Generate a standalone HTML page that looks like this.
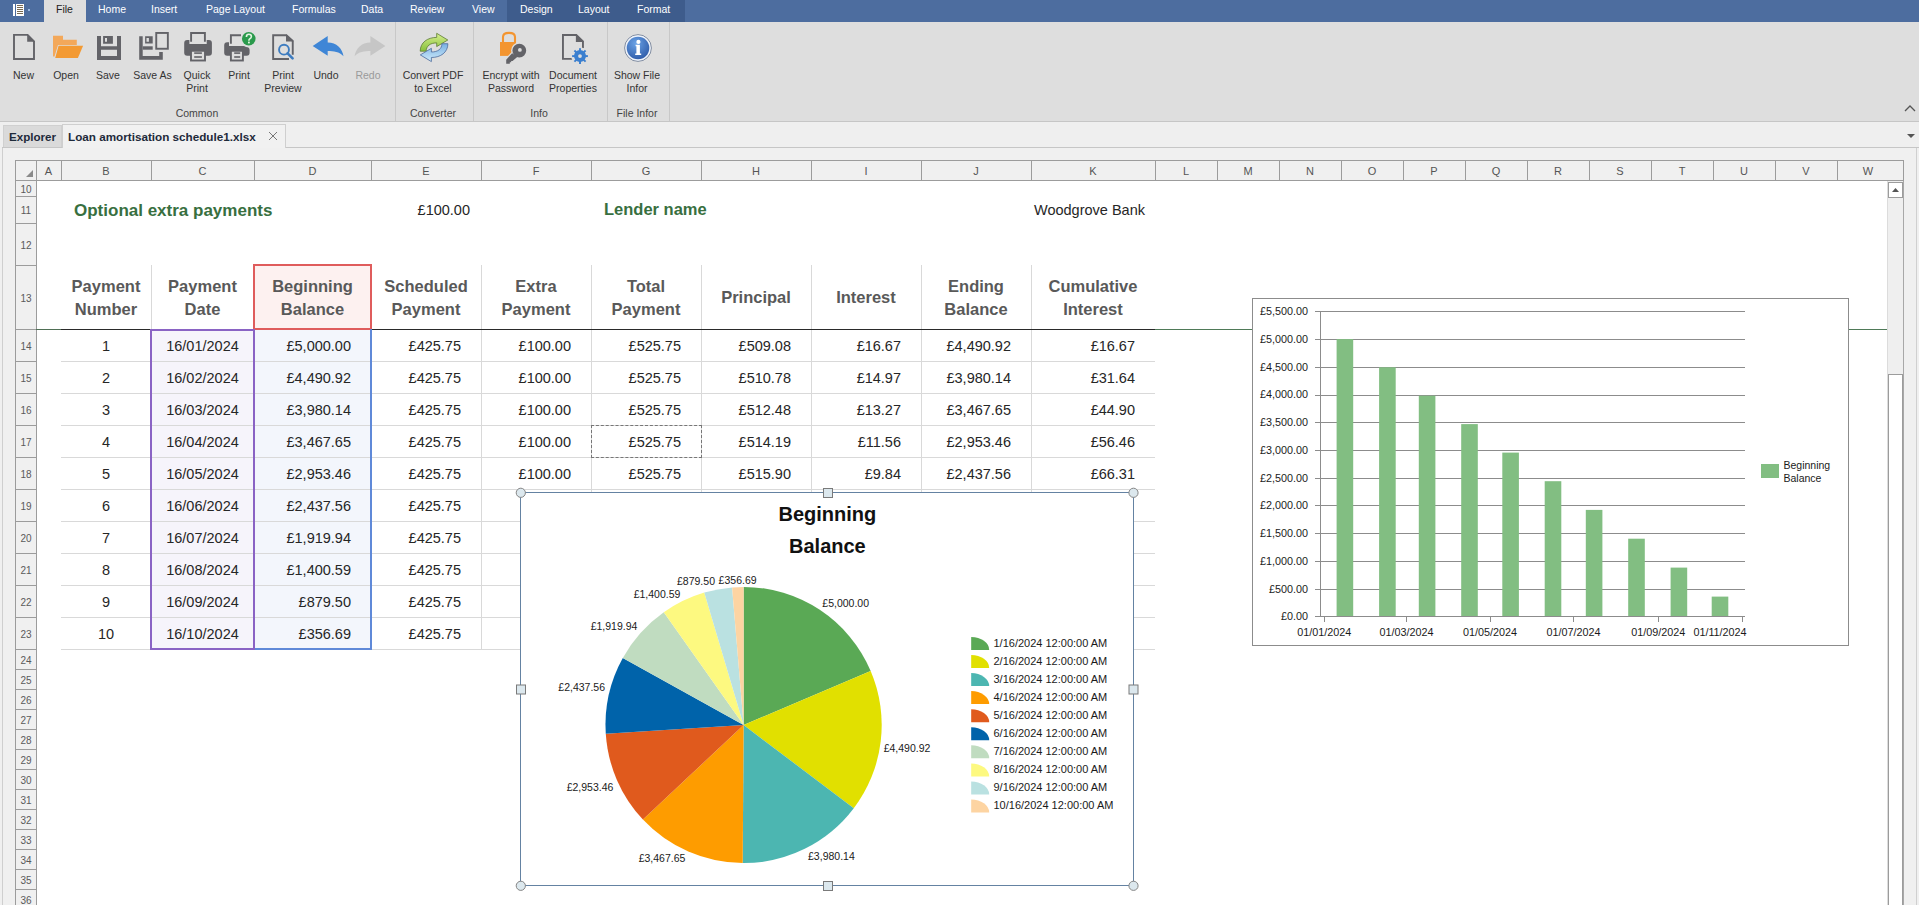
<!DOCTYPE html><html><head><meta charset="utf-8"><style>

*{box-sizing:border-box;margin:0;padding:0}
html,body{width:1919px;height:905px;overflow:hidden;background:#f0f0f0;font-family:"Liberation Sans", sans-serif;position:relative}
.ab{position:absolute}
.t{position:absolute;white-space:nowrap;line-height:1}

</style></head><body>
<div class="ab" style="left:0;top:0;width:1919px;height:22px;background:#4d6d9f"></div>
<div class="ab" style="left:507px;top:0;width:178px;height:22px;background:#3e5c8c"></div>
<div class="ab" style="left:44px;top:0;width:42px;height:22px;background:#dedede"></div>
<div class="ab" style="left:13px;top:4px;width:2px;height:12px;background:#fff"></div>
<div class="ab" style="left:16px;top:4px;width:8px;height:12px;background:#fff"></div>
<div class="ab" style="left:17px;top:5px;width:6px;height:1px;background:#7a6a50"></div>
<div class="ab" style="left:17px;top:7px;width:6px;height:1px;background:#7a6a50"></div>
<div class="ab" style="left:17px;top:9px;width:6px;height:1px;background:#7a6a50"></div>
<div class="ab" style="left:17px;top:11px;width:6px;height:1px;background:#7a6a50"></div>
<div class="ab" style="left:17px;top:13px;width:6px;height:1px;background:#7a6a50"></div>
<div class="ab" style="left:28px;top:9px;width:2px;height:2px;background:#9ab8e0"></div>
<div class="t" style="left:56px;top:4px;font-size:10.5px;color:#222">File</div>
<div class="t" style="left:98px;top:4px;font-size:10.5px;color:#fff">Home</div>
<div class="t" style="left:151px;top:4px;font-size:10.5px;color:#fff">Insert</div>
<div class="t" style="left:206px;top:4px;font-size:10.5px;color:#fff">Page Layout</div>
<div class="t" style="left:292px;top:4px;font-size:10.5px;color:#fff">Formulas</div>
<div class="t" style="left:361px;top:4px;font-size:10.5px;color:#fff">Data</div>
<div class="t" style="left:410px;top:4px;font-size:10.5px;color:#fff">Review</div>
<div class="t" style="left:472px;top:4px;font-size:10.5px;color:#fff">View</div>
<div class="t" style="left:520px;top:4px;font-size:10.5px;color:#fff">Design</div>
<div class="t" style="left:578px;top:4px;font-size:10.5px;color:#fff">Layout</div>
<div class="t" style="left:637px;top:4px;font-size:10.5px;color:#fff">Format</div>
<div class="ab" style="left:0;top:22px;width:1919px;height:100px;background:#dedede;border-bottom:1px solid #c6c6c6"></div>
<div class="ab" style="left:395px;top:22px;width:1px;height:99px;background:#c8c8c8"></div>
<div class="ab" style="left:473px;top:22px;width:1px;height:99px;background:#c8c8c8"></div>
<div class="ab" style="left:607px;top:22px;width:1px;height:99px;background:#c8c8c8"></div>
<div class="ab" style="left:669px;top:22px;width:1px;height:99px;background:#c8c8c8"></div>
<div class="t" style="left:-76.5px;width:200px;text-align:center;top:69.5px;font-size:10.5px;color:#333">New</div>
<div class="t" style="left:-34px;width:200px;text-align:center;top:69.5px;font-size:10.5px;color:#333">Open</div>
<div class="t" style="left:8px;width:200px;text-align:center;top:69.5px;font-size:10.5px;color:#333">Save</div>
<div class="t" style="left:52.5px;width:200px;text-align:center;top:69.5px;font-size:10.5px;color:#333">Save As</div>
<div class="t" style="left:97px;width:200px;text-align:center;top:69.5px;font-size:10.5px;color:#333">Quick</div>
<div class="t" style="left:97px;width:200px;text-align:center;top:82.5px;font-size:10.5px;color:#333">Print</div>
<div class="t" style="left:139px;width:200px;text-align:center;top:69.5px;font-size:10.5px;color:#333">Print</div>
<div class="t" style="left:183px;width:200px;text-align:center;top:69.5px;font-size:10.5px;color:#333">Print</div>
<div class="t" style="left:183px;width:200px;text-align:center;top:82.5px;font-size:10.5px;color:#333">Preview</div>
<div class="t" style="left:226px;width:200px;text-align:center;top:69.5px;font-size:10.5px;color:#333">Undo</div>
<div class="t" style="left:268px;width:200px;text-align:center;top:69.5px;font-size:10.5px;color:#9a9a9a">Redo</div>
<div class="t" style="left:333px;width:200px;text-align:center;top:69.5px;font-size:10.5px;color:#333">Convert PDF</div>
<div class="t" style="left:333px;width:200px;text-align:center;top:82.5px;font-size:10.5px;color:#333">to Excel</div>
<div class="t" style="left:411px;width:200px;text-align:center;top:69.5px;font-size:10.5px;color:#333">Encrypt with</div>
<div class="t" style="left:411px;width:200px;text-align:center;top:82.5px;font-size:10.5px;color:#333">Password</div>
<div class="t" style="left:473px;width:200px;text-align:center;top:69.5px;font-size:10.5px;color:#333">Document</div>
<div class="t" style="left:473px;width:200px;text-align:center;top:82.5px;font-size:10.5px;color:#333">Properties</div>
<div class="t" style="left:537px;width:200px;text-align:center;top:69.5px;font-size:10.5px;color:#333">Show File</div>
<div class="t" style="left:537px;width:200px;text-align:center;top:82.5px;font-size:10.5px;color:#333">Infor</div>
<div class="t" style="left:97px;width:200px;text-align:center;top:107.5px;font-size:10.5px;color:#444">Common</div>
<div class="t" style="left:333px;width:200px;text-align:center;top:107.5px;font-size:10.5px;color:#444">Converter</div>
<div class="t" style="left:439px;width:200px;text-align:center;top:107.5px;font-size:10.5px;color:#444">Info</div>
<div class="t" style="left:537px;width:200px;text-align:center;top:107.5px;font-size:10.5px;color:#444">File Infor</div>
<svg class="ab" style="left:0;top:22px" width="700" height="50" viewBox="0 22 700 50">
<defs>
<linearGradient id="ggr" x1="0" y1="0" x2="0" y2="1"><stop offset="0" stop-color="#d8f090"/><stop offset="1" stop-color="#86c03a"/></linearGradient>
<linearGradient id="bgr" x1="0" y1="0" x2="0" y2="1"><stop offset="0" stop-color="#d0ecfc"/><stop offset="1" stop-color="#78b0e2"/></linearGradient>
<radialGradient id="igr" cx="0.4" cy="0.3" r="0.8"><stop offset="0" stop-color="#6aa2e6"/><stop offset="1" stop-color="#2a56a4"/></radialGradient>
</defs>
<path d="M14,34.9 H27.6 L34,41.3 V59 H14 Z" fill="none" stroke="#636368" stroke-width="1.9"/>
<path d="M27.2,34 L35,41.8 H27.2 Z" fill="#636368"/>
<path d="M53,35.8 H63 V39.7 H76.8 V45 H58 L54.5,56.5 H53 Z" fill="#f3a85a"/>
<path d="M58.6,45.8 H83.1 L77.9,57.9 H55.2 Z" fill="#f39a33"/>
<path fill-rule="evenodd" d="M97,36 H121 V60 H97 Z M101,36 H117 V46.2 H101 Z M101,49.7 H117 V55.9 H101 Z" fill="#636368"/>
<path fill-rule="evenodd" d="M103.1,36 H112.9 V43.7 H103.1 Z M105,38.1 H107 V41.8 H105 Z" fill="#636368"/>
<path d="M139.2,36.2 H142.7 V56 H159.2 V52 H162.8 V59.8 H139.2 Z" fill="#636368"/>
<rect x="142.7" y="46.3" width="10" height="3.4" fill="#636368"/>
<path fill-rule="evenodd" d="M145.1,36.2 H152.7 V43.5 H145.1 Z M146.5,37.9 H148.9 V41.7 H146.5 Z" fill="#636368"/>
<rect x="156.25" y="32.95" width="11.6" height="15.8" fill="none" stroke="#636368" stroke-width="1.9"/>
<path d="M191.1,41.8 V33 H204.89999999999998 V41.8" fill="none" stroke="#636368" stroke-width="1.9"/><path d="M187.2,40.1 H189.39999999999998 V44 H206.7 V40.1 H208.89999999999998 Q211.89999999999998,40.1 211.89999999999998,43.1 V52.7 Q211.89999999999998,55.7 208.89999999999998,55.7 H187.2 Q184.2,55.7 184.2,52.7 V43.1 Q184.2,40.1 187.2,40.1 Z" fill="#636368"/><rect x="191.0" y="50.8" width="14" height="9.7" fill="#dedede" stroke="#636368" stroke-width="1.9"/><rect x="194.2" y="52.3" width="7.7" height="1.6" fill="#636368"/><rect x="194.2" y="56.2" width="7.7" height="1.6" fill="#636368"/>
<path d="M230.9,43.8 V35.2 H241" fill="none" stroke="#636368" stroke-width="1.9"/>
<path d="M227.2,42.2 H229 V46 H244 L246,47 Q249.6,47 249.6,50 V52.7 Q249.6,55.7 246.6,55.7 H227.2 Q224.2,55.7 224.2,52.7 V45.2 Q224.2,42.2 227.2,42.2 Z" fill="#636368"/>
<rect x="230.9" y="50.8" width="12" height="9.7" fill="#dedede" stroke="#636368" stroke-width="1.9"/>
<rect x="234.2" y="52.3" width="6" height="1.6" fill="#636368"/>
<rect x="234.2" y="56.2" width="6" height="1.6" fill="#636368"/>
<circle cx="248.75" cy="38.8" r="7.6" fill="#dedede"/>
<circle cx="248.75" cy="38.8" r="6.8" fill="#2a9a4c"/>
<path d="M246.4,36.9 Q246.4,34.3 248.9,34.3 Q251.4,34.3 251.4,36.6 Q251.4,38.2 249.6,39 Q248.9,39.4 248.9,40.7" fill="none" stroke="#e0f4e0" stroke-width="1.6"/>
<rect x="248" y="41.6" width="1.8" height="1.8" fill="#e0f4e0"/>
<path d="M289,59 H273.15 V35.2 H286.4 L292.75,41 V54.7" fill="none" stroke="#636368" stroke-width="1.9"/>
<path d="M286,34.25 L293.7,41.5 H286 Z" fill="#636368"/>
<circle cx="284" cy="49.7" r="4.95" fill="none" stroke="#3d7cc0" stroke-width="1.9"/>
<path d="M287.6,53.3 L292.6,58.4" stroke="#3d7cc0" stroke-width="2.6" stroke-linecap="round"/>
<path d="M312.7,45.9 L327.7,36.1 V42.4 C336.5,42.4 342.5,48.5 343.5,56.3 C339.5,51.8 333.5,51.1 327.7,51.1 V55.7 Z" fill="#3f86d6"/>
<g transform="translate(698.1,0) scale(-1,1)"><path d="M312.7,45.9 L327.7,36.1 V42.4 C336.5,42.4 342.5,48.5 343.5,56.3 C339.5,51.8 333.5,51.1 327.7,51.1 V55.7 Z" fill="#c6c6c6"/></g>
<path d="M420.2,51.2 C420.2,42.5 427.5,37.4 436.7,37.4 V33.3 L447.8,40 L436.7,46.6 V42.9 C430.2,42.9 426.2,46 426.2,51.2 Z" fill="url(#ggr)" stroke="#5c7a34" stroke-width="0.8"/>
<g transform="rotate(180 434.05 47.45)"><path d="M420.2,51.2 C420.2,42.5 427.5,37.4 436.7,37.4 V33.3 L447.8,40 L436.7,46.6 V42.9 C430.2,42.9 426.2,46 426.2,51.2 Z" fill="url(#bgr)" stroke="#4a6a9c" stroke-width="0.8"/></g>
<path d="M503,42.5 V37 Q503,32.9 509,32.9 Q515,32.9 515,37 V42.5" fill="none" stroke="#f39530" stroke-width="2.1"/>
<rect x="500" y="42" width="16" height="13.9" fill="#f39530"/>
<circle cx="519.3" cy="50.6" r="8.2" fill="#dedede"/>
<path d="M512.1,53.3 L506.2,59.8 L506.2,63.8 L509.8,63.8 L509.8,62.3 L511.2,62.3 L511.2,61.0 L512.6,61.0 L517.5,56.8 Z" fill="#dedede" stroke="#dedede" stroke-width="2.4" stroke-linejoin="round"/>
<path d="M512.1,53.3 L506.2,59.8 L506.2,63.8 L509.8,63.8 L509.8,62.3 L511.2,62.3 L511.2,61.0 L512.6,61.0 L517.5,56.8 Z" fill="#636368"/>
<path fill-rule="evenodd" d="M512.4,50.6 A6.9,6.9 0 1 0 526.2,50.6 A6.9,6.9 0 1 0 512.4,50.6 Z M518,49.9 A1.9,1.9 0 1 0 521.8,49.9 A1.9,1.9 0 1 0 518,49.9 Z" fill="#636368"/>
<path d="M572.7,58.85 H562.95 V35.05 H576.3 L582.95,41.5 V48.3" fill="none" stroke="#636368" stroke-width="1.9"/>
<path d="M575.9,34.1 L583.9,41.9 H575.9 Z" fill="#636368"/>
<circle cx="580" cy="56.1" r="8.8" fill="#dedede"/>
<rect x="579.05" y="48.2" width="1.9" height="3" fill="#3b7fcf" transform="rotate(0 580 56.1)"/><rect x="579.05" y="48.2" width="1.9" height="3" fill="#3b7fcf" transform="rotate(45 580 56.1)"/><rect x="579.05" y="48.2" width="1.9" height="3" fill="#3b7fcf" transform="rotate(90 580 56.1)"/><rect x="579.05" y="48.2" width="1.9" height="3" fill="#3b7fcf" transform="rotate(135 580 56.1)"/><rect x="579.05" y="48.2" width="1.9" height="3" fill="#3b7fcf" transform="rotate(180 580 56.1)"/><rect x="579.05" y="48.2" width="1.9" height="3" fill="#3b7fcf" transform="rotate(225 580 56.1)"/><rect x="579.05" y="48.2" width="1.9" height="3" fill="#3b7fcf" transform="rotate(270 580 56.1)"/><rect x="579.05" y="48.2" width="1.9" height="3" fill="#3b7fcf" transform="rotate(315 580 56.1)"/>
<path fill-rule="evenodd" d="M574,56.1 A6,6 0 1 0 586,56.1 A6,6 0 1 0 574,56.1 Z M578.1,56.1 A1.9,1.9 0 1 0 581.9,56.1 A1.9,1.9 0 1 0 578.1,56.1 Z" fill="#3b7fcf"/>
<circle cx="638" cy="48" r="13.4" fill="#eef3fb" stroke="#56647e" stroke-width="0.7"/>
<circle cx="638" cy="48" r="11.3" fill="url(#igr)"/>
<circle cx="638.4" cy="41.9" r="2.1" fill="#fff"/>
<path d="M635.6,44.8 H639.9 V53.6 H641.2 V55 H635.2 V53.6 H636.4 V46.2 H635.6 Z" fill="#fff"/>
</svg>
<svg class="ab" style="left:1904px;top:105px" width="12" height="8"><path d="M1 6 L6 1 L11 6" fill="none" stroke="#555" stroke-width="1.3"/></svg>
<div class="ab" style="left:0;top:122px;width:1919px;height:26px;background:#efefef"></div>
<div class="ab" style="left:2px;top:147px;width:1917px;height:1px;background:#c6c6c6"></div>
<div class="ab" style="left:3px;top:125px;width:59px;height:22px;background:#dadada;border:1px solid #d0d0d0;border-bottom:none"></div>
<div class="ab" style="left:62px;top:124px;width:224px;height:24px;background:#f1f1f1;border:1px solid #cfcfcf;border-bottom:none"></div>
<div class="t" style="left:9px;top:130.5px;font-size:11.6px;font-weight:bold;color:#1e2a3a">Explorer</div>
<div class="t" style="left:68px;top:130.5px;font-size:11.7px;font-weight:bold;color:#1e2a3a">Loan amortisation schedule1.xlsx</div>
<svg class="ab" style="left:268px;top:131px" width="10" height="10"><path d="M1 1 L9 9 M9 1 L1 9" stroke="#777" stroke-width="1"/></svg>
<svg class="ab" style="left:1906px;top:133px" width="10" height="6"><path d="M1 1 L9 1 L5 5 Z" fill="#555"/></svg>
<div class="ab" style="left:2px;top:148px;width:1px;height:757px;background:#cfcfcf"></div>
<div class="ab" style="left:15px;top:160px;width:1px;height:745px;background:#9c9c9c;"></div>
<div class="ab" style="left:36px;top:181px;width:1851px;height:724px;background:#ffffff;"></div>
<div class="ab" style="left:15px;top:160px;width:1889px;height:21px;background:#f0f0f0;border-top:1px solid #9c9c9c;border-bottom:1px solid #9c9c9c;border-left:1px solid #9c9c9c"></div>
<div class="ab" style="left:36px;top:160px;width:1px;height:21px;background:#9c9c9c;"></div>
<div class="t" style="left:-101.5px;width:300px;text-align:center;top:166.2px;font-size:11px;font-weight:normal;color:#555;">A</div>
<div class="ab" style="left:61px;top:160px;width:1px;height:21px;background:#9c9c9c;"></div>
<div class="t" style="left:-44.0px;width:300px;text-align:center;top:166.2px;font-size:11px;font-weight:normal;color:#555;">B</div>
<div class="ab" style="left:151px;top:160px;width:1px;height:21px;background:#9c9c9c;"></div>
<div class="t" style="left:52.5px;width:300px;text-align:center;top:166.2px;font-size:11px;font-weight:normal;color:#555;">C</div>
<div class="ab" style="left:254px;top:160px;width:1px;height:21px;background:#9c9c9c;"></div>
<div class="t" style="left:162.5px;width:300px;text-align:center;top:166.2px;font-size:11px;font-weight:normal;color:#555;">D</div>
<div class="ab" style="left:371px;top:160px;width:1px;height:21px;background:#9c9c9c;"></div>
<div class="t" style="left:276.0px;width:300px;text-align:center;top:166.2px;font-size:11px;font-weight:normal;color:#555;">E</div>
<div class="ab" style="left:481px;top:160px;width:1px;height:21px;background:#9c9c9c;"></div>
<div class="t" style="left:386.0px;width:300px;text-align:center;top:166.2px;font-size:11px;font-weight:normal;color:#555;">F</div>
<div class="ab" style="left:591px;top:160px;width:1px;height:21px;background:#9c9c9c;"></div>
<div class="t" style="left:496.0px;width:300px;text-align:center;top:166.2px;font-size:11px;font-weight:normal;color:#555;">G</div>
<div class="ab" style="left:701px;top:160px;width:1px;height:21px;background:#9c9c9c;"></div>
<div class="t" style="left:606.0px;width:300px;text-align:center;top:166.2px;font-size:11px;font-weight:normal;color:#555;">H</div>
<div class="ab" style="left:811px;top:160px;width:1px;height:21px;background:#9c9c9c;"></div>
<div class="t" style="left:716.0px;width:300px;text-align:center;top:166.2px;font-size:11px;font-weight:normal;color:#555;">I</div>
<div class="ab" style="left:921px;top:160px;width:1px;height:21px;background:#9c9c9c;"></div>
<div class="t" style="left:826.0px;width:300px;text-align:center;top:166.2px;font-size:11px;font-weight:normal;color:#555;">J</div>
<div class="ab" style="left:1031px;top:160px;width:1px;height:21px;background:#9c9c9c;"></div>
<div class="t" style="left:943.0px;width:300px;text-align:center;top:166.2px;font-size:11px;font-weight:normal;color:#555;">K</div>
<div class="ab" style="left:1155px;top:160px;width:1px;height:21px;background:#9c9c9c;"></div>
<div class="t" style="left:1036.0px;width:300px;text-align:center;top:166.2px;font-size:11px;font-weight:normal;color:#555;">L</div>
<div class="ab" style="left:1217px;top:160px;width:1px;height:21px;background:#9c9c9c;"></div>
<div class="t" style="left:1098.0px;width:300px;text-align:center;top:166.2px;font-size:11px;font-weight:normal;color:#555;">M</div>
<div class="ab" style="left:1279px;top:160px;width:1px;height:21px;background:#9c9c9c;"></div>
<div class="t" style="left:1160.0px;width:300px;text-align:center;top:166.2px;font-size:11px;font-weight:normal;color:#555;">N</div>
<div class="ab" style="left:1341px;top:160px;width:1px;height:21px;background:#9c9c9c;"></div>
<div class="t" style="left:1222.0px;width:300px;text-align:center;top:166.2px;font-size:11px;font-weight:normal;color:#555;">O</div>
<div class="ab" style="left:1403px;top:160px;width:1px;height:21px;background:#9c9c9c;"></div>
<div class="t" style="left:1284.0px;width:300px;text-align:center;top:166.2px;font-size:11px;font-weight:normal;color:#555;">P</div>
<div class="ab" style="left:1465px;top:160px;width:1px;height:21px;background:#9c9c9c;"></div>
<div class="t" style="left:1346.0px;width:300px;text-align:center;top:166.2px;font-size:11px;font-weight:normal;color:#555;">Q</div>
<div class="ab" style="left:1527px;top:160px;width:1px;height:21px;background:#9c9c9c;"></div>
<div class="t" style="left:1408.0px;width:300px;text-align:center;top:166.2px;font-size:11px;font-weight:normal;color:#555;">R</div>
<div class="ab" style="left:1589px;top:160px;width:1px;height:21px;background:#9c9c9c;"></div>
<div class="t" style="left:1470.0px;width:300px;text-align:center;top:166.2px;font-size:11px;font-weight:normal;color:#555;">S</div>
<div class="ab" style="left:1651px;top:160px;width:1px;height:21px;background:#9c9c9c;"></div>
<div class="t" style="left:1532.0px;width:300px;text-align:center;top:166.2px;font-size:11px;font-weight:normal;color:#555;">T</div>
<div class="ab" style="left:1713px;top:160px;width:1px;height:21px;background:#9c9c9c;"></div>
<div class="t" style="left:1594.0px;width:300px;text-align:center;top:166.2px;font-size:11px;font-weight:normal;color:#555;">U</div>
<div class="ab" style="left:1775px;top:160px;width:1px;height:21px;background:#9c9c9c;"></div>
<div class="t" style="left:1656.0px;width:300px;text-align:center;top:166.2px;font-size:11px;font-weight:normal;color:#555;">V</div>
<div class="ab" style="left:1837px;top:160px;width:1px;height:21px;background:#9c9c9c;"></div>
<div class="t" style="left:1718px;width:300px;text-align:center;top:166.2px;font-size:11px;font-weight:normal;color:#555;">W</div>
<div class="ab" style="left:1903px;top:160px;width:1px;height:21px;background:#9c9c9c;"></div>
<svg class="ab" style="left:25px;top:169px" width="9" height="9"><path d="M1 8 L8 8 L8 1 Z" fill="#8a8a8a"/></svg>
<div class="ab" style="left:15px;top:181px;width:22px;height:724px;background:#f0f0f0;border-right:1px solid #9c9c9c;border-left:1px solid #9c9c9c"></div>
<div class="ab" style="left:15px;top:196px;width:21px;height:1px;background:#9c9c9c;"></div>
<div class="t" style="left:-124px;width:300px;text-align:center;top:184.5px;font-size:10px;font-weight:normal;color:#5a5a5a;">10</div>
<div class="ab" style="left:15px;top:223px;width:21px;height:1px;background:#9c9c9c;"></div>
<div class="t" style="left:-124px;width:300px;text-align:center;top:206.0px;font-size:10px;font-weight:normal;color:#5a5a5a;">11</div>
<div class="ab" style="left:15px;top:265px;width:21px;height:1px;background:#9c9c9c;"></div>
<div class="t" style="left:-124px;width:300px;text-align:center;top:240.5px;font-size:10px;font-weight:normal;color:#5a5a5a;">12</div>
<div class="ab" style="left:15px;top:329px;width:21px;height:1px;background:#9c9c9c;"></div>
<div class="t" style="left:-124px;width:300px;text-align:center;top:293.5px;font-size:10px;font-weight:normal;color:#5a5a5a;">13</div>
<div class="ab" style="left:15px;top:361px;width:21px;height:1px;background:#9c9c9c;"></div>
<div class="t" style="left:-124px;width:300px;text-align:center;top:341.5px;font-size:10px;font-weight:normal;color:#5a5a5a;">14</div>
<div class="ab" style="left:15px;top:393px;width:21px;height:1px;background:#9c9c9c;"></div>
<div class="t" style="left:-124px;width:300px;text-align:center;top:373.5px;font-size:10px;font-weight:normal;color:#5a5a5a;">15</div>
<div class="ab" style="left:15px;top:425px;width:21px;height:1px;background:#9c9c9c;"></div>
<div class="t" style="left:-124px;width:300px;text-align:center;top:405.5px;font-size:10px;font-weight:normal;color:#5a5a5a;">16</div>
<div class="ab" style="left:15px;top:457px;width:21px;height:1px;background:#9c9c9c;"></div>
<div class="t" style="left:-124px;width:300px;text-align:center;top:437.5px;font-size:10px;font-weight:normal;color:#5a5a5a;">17</div>
<div class="ab" style="left:15px;top:489px;width:21px;height:1px;background:#9c9c9c;"></div>
<div class="t" style="left:-124px;width:300px;text-align:center;top:469.5px;font-size:10px;font-weight:normal;color:#5a5a5a;">18</div>
<div class="ab" style="left:15px;top:521px;width:21px;height:1px;background:#9c9c9c;"></div>
<div class="t" style="left:-124px;width:300px;text-align:center;top:501.5px;font-size:10px;font-weight:normal;color:#5a5a5a;">19</div>
<div class="ab" style="left:15px;top:553px;width:21px;height:1px;background:#9c9c9c;"></div>
<div class="t" style="left:-124px;width:300px;text-align:center;top:533.5px;font-size:10px;font-weight:normal;color:#5a5a5a;">20</div>
<div class="ab" style="left:15px;top:585px;width:21px;height:1px;background:#9c9c9c;"></div>
<div class="t" style="left:-124px;width:300px;text-align:center;top:565.5px;font-size:10px;font-weight:normal;color:#5a5a5a;">21</div>
<div class="ab" style="left:15px;top:617px;width:21px;height:1px;background:#9c9c9c;"></div>
<div class="t" style="left:-124px;width:300px;text-align:center;top:597.5px;font-size:10px;font-weight:normal;color:#5a5a5a;">22</div>
<div class="ab" style="left:15px;top:649px;width:21px;height:1px;background:#9c9c9c;"></div>
<div class="t" style="left:-124px;width:300px;text-align:center;top:629.5px;font-size:10px;font-weight:normal;color:#5a5a5a;">23</div>
<div class="ab" style="left:15px;top:669px;width:21px;height:1px;background:#9c9c9c;"></div>
<div class="t" style="left:-124px;width:300px;text-align:center;top:655.5px;font-size:10px;font-weight:normal;color:#5a5a5a;">24</div>
<div class="ab" style="left:15px;top:689px;width:21px;height:1px;background:#9c9c9c;"></div>
<div class="t" style="left:-124px;width:300px;text-align:center;top:675.5px;font-size:10px;font-weight:normal;color:#5a5a5a;">25</div>
<div class="ab" style="left:15px;top:709px;width:21px;height:1px;background:#9c9c9c;"></div>
<div class="t" style="left:-124px;width:300px;text-align:center;top:695.5px;font-size:10px;font-weight:normal;color:#5a5a5a;">26</div>
<div class="ab" style="left:15px;top:729px;width:21px;height:1px;background:#9c9c9c;"></div>
<div class="t" style="left:-124px;width:300px;text-align:center;top:715.5px;font-size:10px;font-weight:normal;color:#5a5a5a;">27</div>
<div class="ab" style="left:15px;top:749px;width:21px;height:1px;background:#9c9c9c;"></div>
<div class="t" style="left:-124px;width:300px;text-align:center;top:735.5px;font-size:10px;font-weight:normal;color:#5a5a5a;">28</div>
<div class="ab" style="left:15px;top:769px;width:21px;height:1px;background:#9c9c9c;"></div>
<div class="t" style="left:-124px;width:300px;text-align:center;top:755.5px;font-size:10px;font-weight:normal;color:#5a5a5a;">29</div>
<div class="ab" style="left:15px;top:789px;width:21px;height:1px;background:#9c9c9c;"></div>
<div class="t" style="left:-124px;width:300px;text-align:center;top:775.5px;font-size:10px;font-weight:normal;color:#5a5a5a;">30</div>
<div class="ab" style="left:15px;top:809px;width:21px;height:1px;background:#9c9c9c;"></div>
<div class="t" style="left:-124px;width:300px;text-align:center;top:795.5px;font-size:10px;font-weight:normal;color:#5a5a5a;">31</div>
<div class="ab" style="left:15px;top:829px;width:21px;height:1px;background:#9c9c9c;"></div>
<div class="t" style="left:-124px;width:300px;text-align:center;top:815.5px;font-size:10px;font-weight:normal;color:#5a5a5a;">32</div>
<div class="ab" style="left:15px;top:849px;width:21px;height:1px;background:#9c9c9c;"></div>
<div class="t" style="left:-124px;width:300px;text-align:center;top:835.5px;font-size:10px;font-weight:normal;color:#5a5a5a;">33</div>
<div class="ab" style="left:15px;top:869px;width:21px;height:1px;background:#9c9c9c;"></div>
<div class="t" style="left:-124px;width:300px;text-align:center;top:855.5px;font-size:10px;font-weight:normal;color:#5a5a5a;">34</div>
<div class="ab" style="left:15px;top:889px;width:21px;height:1px;background:#9c9c9c;"></div>
<div class="t" style="left:-124px;width:300px;text-align:center;top:875.5px;font-size:10px;font-weight:normal;color:#5a5a5a;">35</div>
<div class="ab" style="left:15px;top:909px;width:21px;height:1px;background:#9c9c9c;"></div>
<div class="t" style="left:-124px;width:300px;text-align:center;top:895.5px;font-size:10px;font-weight:normal;color:#5a5a5a;">36</div>
<div class="ab" style="left:151px;top:265px;width:1px;height:64px;background:#d9d9d9;"></div>
<div class="ab" style="left:481px;top:265px;width:1px;height:64px;background:#d9d9d9;"></div>
<div class="ab" style="left:591px;top:265px;width:1px;height:64px;background:#d9d9d9;"></div>
<div class="ab" style="left:701px;top:265px;width:1px;height:64px;background:#d9d9d9;"></div>
<div class="ab" style="left:811px;top:265px;width:1px;height:64px;background:#d9d9d9;"></div>
<div class="ab" style="left:921px;top:265px;width:1px;height:64px;background:#d9d9d9;"></div>
<div class="ab" style="left:1031px;top:265px;width:1px;height:64px;background:#d9d9d9;"></div>
<div class="ab" style="left:254px;top:265px;width:117px;height:64px;background:#fdf1f0;"></div>
<div class="ab" style="left:151px;top:329px;width:103px;height:320px;background:#f6f4fb;"></div>
<div class="ab" style="left:254px;top:329px;width:117px;height:320px;background:#f3f6fc;"></div>
<div class="ab" style="left:61px;top:361px;width:1094px;height:1px;background:#d9d9d9;"></div>
<div class="ab" style="left:61px;top:393px;width:1094px;height:1px;background:#d9d9d9;"></div>
<div class="ab" style="left:61px;top:425px;width:1094px;height:1px;background:#d9d9d9;"></div>
<div class="ab" style="left:61px;top:457px;width:1094px;height:1px;background:#d9d9d9;"></div>
<div class="ab" style="left:61px;top:489px;width:1094px;height:1px;background:#d9d9d9;"></div>
<div class="ab" style="left:61px;top:521px;width:1094px;height:1px;background:#d9d9d9;"></div>
<div class="ab" style="left:61px;top:553px;width:1094px;height:1px;background:#d9d9d9;"></div>
<div class="ab" style="left:61px;top:585px;width:1094px;height:1px;background:#d9d9d9;"></div>
<div class="ab" style="left:61px;top:617px;width:1094px;height:1px;background:#d9d9d9;"></div>
<div class="ab" style="left:61px;top:649px;width:1094px;height:1px;background:#d9d9d9;"></div>
<div class="ab" style="left:481px;top:329px;width:1px;height:320px;background:#d9d9d9;"></div>
<div class="ab" style="left:591px;top:329px;width:1px;height:320px;background:#d9d9d9;"></div>
<div class="ab" style="left:701px;top:329px;width:1px;height:320px;background:#d9d9d9;"></div>
<div class="ab" style="left:811px;top:329px;width:1px;height:320px;background:#d9d9d9;"></div>
<div class="ab" style="left:921px;top:329px;width:1px;height:320px;background:#d9d9d9;"></div>
<div class="ab" style="left:1031px;top:329px;width:1px;height:320px;background:#d9d9d9;"></div>
<div class="ab" style="left:36px;top:329px;width:25px;height:1px;background:#4f6f55;"></div>
<div class="ab" style="left:61px;top:329px;width:1094px;height:1px;background:#2a2a2a;"></div>
<div class="ab" style="left:1155px;top:329px;width:732px;height:1px;background:#4f7a58;"></div>
<div class="ab" style="left:253px;top:264px;width:119px;height:66px;background:transparent;border:2px solid #df5c5c"></div>
<div class="ab" style="left:150px;top:329px;width:105px;height:321px;background:transparent;border:2px solid #8a63c4;border-top:2px solid #8a63c4"></div>
<div class="ab" style="left:253px;top:329px;width:119px;height:321px;background:transparent;border:2px solid #5f89d8;border-top:none;border-left:none"></div>
<div class="ab" style="left:253px;top:330px;width:2px;height:320px;background:#8a63c4;"></div>
<div class="ab" style="left:591px;top:425px;width:111px;height:33px;background:transparent;border:1px dashed #777"></div>
<div class="t" style="left:74px;top:201.8px;font-size:17px;font-weight:bold;color:#386f40;">Optional extra payments</div>
<div class="t" style="right:1449px;top:203.0px;font-size:14.5px;font-weight:normal;color:#262626;">£100.00</div>
<div class="t" style="left:604px;top:201.0px;font-size:16.5px;font-weight:bold;color:#386f40;">Lender name</div>
<div class="t" style="left:1034px;top:203.0px;font-size:14.5px;font-weight:normal;color:#262626;">Woodgrove Bank</div>
<div class="t" style="left:-44px;width:300px;text-align:center;top:277.6px;font-size:16.5px;font-weight:bold;color:#595959;">Payment</div>
<div class="t" style="left:-44px;width:300px;text-align:center;top:300.6px;font-size:16.5px;font-weight:bold;color:#595959;">Number</div>
<div class="t" style="left:52.5px;width:300px;text-align:center;top:277.6px;font-size:16.5px;font-weight:bold;color:#595959;">Payment</div>
<div class="t" style="left:52.5px;width:300px;text-align:center;top:300.6px;font-size:16.5px;font-weight:bold;color:#595959;">Date</div>
<div class="t" style="left:162.5px;width:300px;text-align:center;top:277.6px;font-size:16.5px;font-weight:bold;color:#595959;">Beginning</div>
<div class="t" style="left:162.5px;width:300px;text-align:center;top:300.6px;font-size:16.5px;font-weight:bold;color:#595959;">Balance</div>
<div class="t" style="left:276px;width:300px;text-align:center;top:277.6px;font-size:16.5px;font-weight:bold;color:#595959;">Scheduled</div>
<div class="t" style="left:276px;width:300px;text-align:center;top:300.6px;font-size:16.5px;font-weight:bold;color:#595959;">Payment</div>
<div class="t" style="left:386px;width:300px;text-align:center;top:277.6px;font-size:16.5px;font-weight:bold;color:#595959;">Extra</div>
<div class="t" style="left:386px;width:300px;text-align:center;top:300.6px;font-size:16.5px;font-weight:bold;color:#595959;">Payment</div>
<div class="t" style="left:496px;width:300px;text-align:center;top:277.6px;font-size:16.5px;font-weight:bold;color:#595959;">Total</div>
<div class="t" style="left:496px;width:300px;text-align:center;top:300.6px;font-size:16.5px;font-weight:bold;color:#595959;">Payment</div>
<div class="t" style="left:606px;width:300px;text-align:center;top:289.2px;font-size:16.5px;font-weight:bold;color:#595959;">Principal</div>
<div class="t" style="left:716px;width:300px;text-align:center;top:289.2px;font-size:16.5px;font-weight:bold;color:#595959;">Interest</div>
<div class="t" style="left:826px;width:300px;text-align:center;top:277.6px;font-size:16.5px;font-weight:bold;color:#595959;">Ending</div>
<div class="t" style="left:826px;width:300px;text-align:center;top:300.6px;font-size:16.5px;font-weight:bold;color:#595959;">Balance</div>
<div class="t" style="left:943px;width:300px;text-align:center;top:277.6px;font-size:16.5px;font-weight:bold;color:#595959;">Cumulative</div>
<div class="t" style="left:943px;width:300px;text-align:center;top:300.6px;font-size:16.5px;font-weight:bold;color:#595959;">Interest</div>
<div class="t" style="left:-44px;width:300px;text-align:center;top:338.8px;font-size:14.5px;font-weight:normal;color:#262626;">1</div>
<div class="t" style="left:52.5px;width:300px;text-align:center;top:338.8px;font-size:14.5px;font-weight:normal;color:#262626;">16/01/2024</div>
<div class="t" style="right:1568px;top:338.8px;font-size:14.5px;font-weight:normal;color:#262626;">£5,000.00</div>
<div class="t" style="right:1458px;top:338.8px;font-size:14.5px;font-weight:normal;color:#262626;">£425.75</div>
<div class="t" style="right:1348px;top:338.8px;font-size:14.5px;font-weight:normal;color:#262626;">£100.00</div>
<div class="t" style="right:1238px;top:338.8px;font-size:14.5px;font-weight:normal;color:#262626;">£525.75</div>
<div class="t" style="right:1128px;top:338.8px;font-size:14.5px;font-weight:normal;color:#262626;">£509.08</div>
<div class="t" style="right:1018px;top:338.8px;font-size:14.5px;font-weight:normal;color:#262626;">£16.67</div>
<div class="t" style="right:908px;top:338.8px;font-size:14.5px;font-weight:normal;color:#262626;">£4,490.92</div>
<div class="t" style="right:784px;top:338.8px;font-size:14.5px;font-weight:normal;color:#262626;">£16.67</div>
<div class="t" style="left:-44px;width:300px;text-align:center;top:370.8px;font-size:14.5px;font-weight:normal;color:#262626;">2</div>
<div class="t" style="left:52.5px;width:300px;text-align:center;top:370.8px;font-size:14.5px;font-weight:normal;color:#262626;">16/02/2024</div>
<div class="t" style="right:1568px;top:370.8px;font-size:14.5px;font-weight:normal;color:#262626;">£4,490.92</div>
<div class="t" style="right:1458px;top:370.8px;font-size:14.5px;font-weight:normal;color:#262626;">£425.75</div>
<div class="t" style="right:1348px;top:370.8px;font-size:14.5px;font-weight:normal;color:#262626;">£100.00</div>
<div class="t" style="right:1238px;top:370.8px;font-size:14.5px;font-weight:normal;color:#262626;">£525.75</div>
<div class="t" style="right:1128px;top:370.8px;font-size:14.5px;font-weight:normal;color:#262626;">£510.78</div>
<div class="t" style="right:1018px;top:370.8px;font-size:14.5px;font-weight:normal;color:#262626;">£14.97</div>
<div class="t" style="right:908px;top:370.8px;font-size:14.5px;font-weight:normal;color:#262626;">£3,980.14</div>
<div class="t" style="right:784px;top:370.8px;font-size:14.5px;font-weight:normal;color:#262626;">£31.64</div>
<div class="t" style="left:-44px;width:300px;text-align:center;top:402.8px;font-size:14.5px;font-weight:normal;color:#262626;">3</div>
<div class="t" style="left:52.5px;width:300px;text-align:center;top:402.8px;font-size:14.5px;font-weight:normal;color:#262626;">16/03/2024</div>
<div class="t" style="right:1568px;top:402.8px;font-size:14.5px;font-weight:normal;color:#262626;">£3,980.14</div>
<div class="t" style="right:1458px;top:402.8px;font-size:14.5px;font-weight:normal;color:#262626;">£425.75</div>
<div class="t" style="right:1348px;top:402.8px;font-size:14.5px;font-weight:normal;color:#262626;">£100.00</div>
<div class="t" style="right:1238px;top:402.8px;font-size:14.5px;font-weight:normal;color:#262626;">£525.75</div>
<div class="t" style="right:1128px;top:402.8px;font-size:14.5px;font-weight:normal;color:#262626;">£512.48</div>
<div class="t" style="right:1018px;top:402.8px;font-size:14.5px;font-weight:normal;color:#262626;">£13.27</div>
<div class="t" style="right:908px;top:402.8px;font-size:14.5px;font-weight:normal;color:#262626;">£3,467.65</div>
<div class="t" style="right:784px;top:402.8px;font-size:14.5px;font-weight:normal;color:#262626;">£44.90</div>
<div class="t" style="left:-44px;width:300px;text-align:center;top:434.8px;font-size:14.5px;font-weight:normal;color:#262626;">4</div>
<div class="t" style="left:52.5px;width:300px;text-align:center;top:434.8px;font-size:14.5px;font-weight:normal;color:#262626;">16/04/2024</div>
<div class="t" style="right:1568px;top:434.8px;font-size:14.5px;font-weight:normal;color:#262626;">£3,467.65</div>
<div class="t" style="right:1458px;top:434.8px;font-size:14.5px;font-weight:normal;color:#262626;">£425.75</div>
<div class="t" style="right:1348px;top:434.8px;font-size:14.5px;font-weight:normal;color:#262626;">£100.00</div>
<div class="t" style="right:1238px;top:434.8px;font-size:14.5px;font-weight:normal;color:#262626;">£525.75</div>
<div class="t" style="right:1128px;top:434.8px;font-size:14.5px;font-weight:normal;color:#262626;">£514.19</div>
<div class="t" style="right:1018px;top:434.8px;font-size:14.5px;font-weight:normal;color:#262626;">£11.56</div>
<div class="t" style="right:908px;top:434.8px;font-size:14.5px;font-weight:normal;color:#262626;">£2,953.46</div>
<div class="t" style="right:784px;top:434.8px;font-size:14.5px;font-weight:normal;color:#262626;">£56.46</div>
<div class="t" style="left:-44px;width:300px;text-align:center;top:466.8px;font-size:14.5px;font-weight:normal;color:#262626;">5</div>
<div class="t" style="left:52.5px;width:300px;text-align:center;top:466.8px;font-size:14.5px;font-weight:normal;color:#262626;">16/05/2024</div>
<div class="t" style="right:1568px;top:466.8px;font-size:14.5px;font-weight:normal;color:#262626;">£2,953.46</div>
<div class="t" style="right:1458px;top:466.8px;font-size:14.5px;font-weight:normal;color:#262626;">£425.75</div>
<div class="t" style="right:1348px;top:466.8px;font-size:14.5px;font-weight:normal;color:#262626;">£100.00</div>
<div class="t" style="right:1238px;top:466.8px;font-size:14.5px;font-weight:normal;color:#262626;">£525.75</div>
<div class="t" style="right:1128px;top:466.8px;font-size:14.5px;font-weight:normal;color:#262626;">£515.90</div>
<div class="t" style="right:1018px;top:466.8px;font-size:14.5px;font-weight:normal;color:#262626;">£9.84</div>
<div class="t" style="right:908px;top:466.8px;font-size:14.5px;font-weight:normal;color:#262626;">£2,437.56</div>
<div class="t" style="right:784px;top:466.8px;font-size:14.5px;font-weight:normal;color:#262626;">£66.31</div>
<div class="t" style="left:-44px;width:300px;text-align:center;top:498.8px;font-size:14.5px;font-weight:normal;color:#262626;">6</div>
<div class="t" style="left:52.5px;width:300px;text-align:center;top:498.8px;font-size:14.5px;font-weight:normal;color:#262626;">16/06/2024</div>
<div class="t" style="right:1568px;top:498.8px;font-size:14.5px;font-weight:normal;color:#262626;">£2,437.56</div>
<div class="t" style="right:1458px;top:498.8px;font-size:14.5px;font-weight:normal;color:#262626;">£425.75</div>
<div class="t" style="left:-44px;width:300px;text-align:center;top:530.8px;font-size:14.5px;font-weight:normal;color:#262626;">7</div>
<div class="t" style="left:52.5px;width:300px;text-align:center;top:530.8px;font-size:14.5px;font-weight:normal;color:#262626;">16/07/2024</div>
<div class="t" style="right:1568px;top:530.8px;font-size:14.5px;font-weight:normal;color:#262626;">£1,919.94</div>
<div class="t" style="right:1458px;top:530.8px;font-size:14.5px;font-weight:normal;color:#262626;">£425.75</div>
<div class="t" style="left:-44px;width:300px;text-align:center;top:562.8px;font-size:14.5px;font-weight:normal;color:#262626;">8</div>
<div class="t" style="left:52.5px;width:300px;text-align:center;top:562.8px;font-size:14.5px;font-weight:normal;color:#262626;">16/08/2024</div>
<div class="t" style="right:1568px;top:562.8px;font-size:14.5px;font-weight:normal;color:#262626;">£1,400.59</div>
<div class="t" style="right:1458px;top:562.8px;font-size:14.5px;font-weight:normal;color:#262626;">£425.75</div>
<div class="t" style="left:-44px;width:300px;text-align:center;top:594.8px;font-size:14.5px;font-weight:normal;color:#262626;">9</div>
<div class="t" style="left:52.5px;width:300px;text-align:center;top:594.8px;font-size:14.5px;font-weight:normal;color:#262626;">16/09/2024</div>
<div class="t" style="right:1568px;top:594.8px;font-size:14.5px;font-weight:normal;color:#262626;">£879.50</div>
<div class="t" style="right:1458px;top:594.8px;font-size:14.5px;font-weight:normal;color:#262626;">£425.75</div>
<div class="t" style="left:-44px;width:300px;text-align:center;top:626.8px;font-size:14.5px;font-weight:normal;color:#262626;">10</div>
<div class="t" style="left:52.5px;width:300px;text-align:center;top:626.8px;font-size:14.5px;font-weight:normal;color:#262626;">16/10/2024</div>
<div class="t" style="right:1568px;top:626.8px;font-size:14.5px;font-weight:normal;color:#262626;">£356.69</div>
<div class="t" style="right:1458px;top:626.8px;font-size:14.5px;font-weight:normal;color:#262626;">£425.75</div>
<div class="ab" style="left:1887px;top:181px;width:17px;height:724px;background:#efefef;border-left:1px solid #dcdcdc;border-right:1px solid #a8a8a8"></div>
<div class="ab" style="left:1888px;top:182px;width:15px;height:16px;background:#fff;border:1px solid #9c9c9c"></div>
<svg class="ab" style="left:1891px;top:186px" width="10" height="8"><path d="M1 6 L8 6 L4.5 2 Z" fill="#555"/></svg>
<div class="ab" style="left:1888px;top:374px;width:15px;height:540px;background:#fff;border:1px solid #9c9c9c"></div>
<div class="ab" style="left:1916px;top:148px;width:1px;height:757px;background:#d0d0d0;"></div>
<div class="ab" style="left:520px;top:493px;width:614px;height:394px;background:#fff"></div>
<svg class="ab" style="left:0;top:0" width="1919" height="905" viewBox="0 0 1919 905">
<path d="M743.6,725.0 L743.60,586.90 A138.1,138.1 0 0 1 870.67,670.93 Z" fill="#5aa955"/>
<path d="M743.6,725.0 L870.67,670.93 A138.1,138.1 0 0 1 853.78,808.26 Z" fill="#e1e000"/>
<path d="M743.6,725.0 L853.78,808.26 A138.1,138.1 0 0 1 742.70,863.10 Z" fill="#4cb6b1"/>
<path d="M743.6,725.0 L742.70,863.10 A138.1,138.1 0 0 1 642.92,819.53 Z" fill="#fe9c00"/>
<path d="M743.6,725.0 L642.92,819.53 A138.1,138.1 0 0 1 605.78,733.79 Z" fill="#e05a1d"/>
<path d="M743.6,725.0 L605.78,733.79 A138.1,138.1 0 0 1 622.80,658.07 Z" fill="#0063aa"/>
<path d="M743.6,725.0 L622.80,658.07 A138.1,138.1 0 0 1 663.79,612.30 Z" fill="#c0dcc0"/>
<path d="M743.6,725.0 L663.79,612.30 A138.1,138.1 0 0 1 704.26,592.62 Z" fill="#fdf980"/>
<path d="M743.6,725.0 L704.26,592.62 A138.1,138.1 0 0 1 732.10,587.38 Z" fill="#bae1e1"/>
<path d="M743.6,725.0 L732.10,587.38 A138.1,138.1 0 0 1 743.60,586.90 Z" fill="#fdd4a2"/>
<path d="M971.2,650.0 L971.2,637.0 A18,13 0 0 1 989.2,650.0 Z" fill="#5aa955"/>
<path d="M971.2,668.0 L971.2,655.0 A18,13 0 0 1 989.2,668.0 Z" fill="#e1e000"/>
<path d="M971.2,686.1 L971.2,673.1 A18,13 0 0 1 989.2,686.1 Z" fill="#4cb6b1"/>
<path d="M971.2,704.1 L971.2,691.1 A18,13 0 0 1 989.2,704.1 Z" fill="#fe9c00"/>
<path d="M971.2,722.2 L971.2,709.2 A18,13 0 0 1 989.2,722.2 Z" fill="#e05a1d"/>
<path d="M971.2,740.2 L971.2,727.2 A18,13 0 0 1 989.2,740.2 Z" fill="#0063aa"/>
<path d="M971.2,758.3 L971.2,745.3 A18,13 0 0 1 989.2,758.3 Z" fill="#c0dcc0"/>
<path d="M971.2,776.4 L971.2,763.4 A18,13 0 0 1 989.2,776.4 Z" fill="#fdf980"/>
<path d="M971.2,794.4 L971.2,781.4 A18,13 0 0 1 989.2,794.4 Z" fill="#bae1e1"/>
<path d="M971.2,812.5 L971.2,799.5 A18,13 0 0 1 989.2,812.5 Z" fill="#fdd4a2"/>
<rect x="520.5" y="492.5" width="613" height="393" fill="none" stroke="#6482a2" stroke-width="1"/>
<circle cx="520.8" cy="492.8" r="4.6" fill="#dce8ee" stroke="#858585" stroke-width="1"/>
<circle cx="1133.5" cy="492.8" r="4.6" fill="#dce8ee" stroke="#858585" stroke-width="1"/>
<circle cx="520.8" cy="885.8" r="4.6" fill="#dce8ee" stroke="#858585" stroke-width="1"/>
<circle cx="1133.5" cy="885.8" r="4.6" fill="#dce8ee" stroke="#858585" stroke-width="1"/>
<rect x="823.5" y="488.5" width="9" height="9" fill="#dce8ee" stroke="#7a7a7a" stroke-width="1"/>
<rect x="516.5" y="685.0" width="9" height="9" fill="#dce8ee" stroke="#7a7a7a" stroke-width="1"/>
<rect x="1129.0" y="685.0" width="9" height="9" fill="#dce8ee" stroke="#7a7a7a" stroke-width="1"/>
<rect x="823.5" y="881.5" width="9" height="9" fill="#dce8ee" stroke="#7a7a7a" stroke-width="1"/>
</svg>
<div class="t" style="left:677.4px;width:300px;text-align:center;top:504.0px;font-size:20px;font-weight:bold;color:#111">Beginning</div>
<div class="t" style="left:677.4px;width:300px;text-align:center;top:535.6px;font-size:20px;font-weight:bold;color:#111">Balance</div>
<div class="t" style="left:695.7px;width:300px;text-align:center;top:597.9px;font-size:10.5px;font-weight:normal;color:#1a1a1a">£5,000.00</div>
<div class="t" style="left:757px;width:300px;text-align:center;top:742.6px;font-size:10.5px;font-weight:normal;color:#1a1a1a">£4,490.92</div>
<div class="t" style="left:681.4px;width:300px;text-align:center;top:850.8px;font-size:10.5px;font-weight:normal;color:#1a1a1a">£3,980.14</div>
<div class="t" style="left:512px;width:300px;text-align:center;top:853.1px;font-size:10.5px;font-weight:normal;color:#1a1a1a">£3,467.65</div>
<div class="t" style="left:440px;width:300px;text-align:center;top:782.1px;font-size:10.5px;font-weight:normal;color:#1a1a1a">£2,953.46</div>
<div class="t" style="left:431.70000000000005px;width:300px;text-align:center;top:682.3px;font-size:10.5px;font-weight:normal;color:#1a1a1a">£2,437.56</div>
<div class="t" style="left:464px;width:300px;text-align:center;top:621.1px;font-size:10.5px;font-weight:normal;color:#1a1a1a">£1,919.94</div>
<div class="t" style="left:507px;width:300px;text-align:center;top:588.6px;font-size:10.5px;font-weight:normal;color:#1a1a1a">£1,400.59</div>
<div class="t" style="left:546px;width:300px;text-align:center;top:576.1px;font-size:10.5px;font-weight:normal;color:#1a1a1a">£879.50</div>
<div class="t" style="left:587.6px;width:300px;text-align:center;top:574.7px;font-size:10.5px;font-weight:normal;color:#1a1a1a">£356.69</div>
<div class="t" style="left:993.5px;top:637.9px;font-size:11px;font-weight:normal;color:#1a1a1a">1/16/2024 12:00:00 AM</div>
<div class="t" style="left:993.5px;top:655.9px;font-size:11px;font-weight:normal;color:#1a1a1a">2/16/2024 12:00:00 AM</div>
<div class="t" style="left:993.5px;top:674.0px;font-size:11px;font-weight:normal;color:#1a1a1a">3/16/2024 12:00:00 AM</div>
<div class="t" style="left:993.5px;top:692.0px;font-size:11px;font-weight:normal;color:#1a1a1a">4/16/2024 12:00:00 AM</div>
<div class="t" style="left:993.5px;top:710.1px;font-size:11px;font-weight:normal;color:#1a1a1a">5/16/2024 12:00:00 AM</div>
<div class="t" style="left:993.5px;top:728.1px;font-size:11px;font-weight:normal;color:#1a1a1a">6/16/2024 12:00:00 AM</div>
<div class="t" style="left:993.5px;top:746.2px;font-size:11px;font-weight:normal;color:#1a1a1a">7/16/2024 12:00:00 AM</div>
<div class="t" style="left:993.5px;top:764.2px;font-size:11px;font-weight:normal;color:#1a1a1a">8/16/2024 12:00:00 AM</div>
<div class="t" style="left:993.5px;top:782.3px;font-size:11px;font-weight:normal;color:#1a1a1a">9/16/2024 12:00:00 AM</div>
<div class="t" style="left:993.5px;top:800.3px;font-size:11px;font-weight:normal;color:#1a1a1a">10/16/2024 12:00:00 AM</div>
<div class="ab" style="left:1252px;top:298px;width:597px;height:348px;background:#fff;border:1px solid #8c8c8c"></div>
<svg class="ab" style="left:0;top:0" width="1919" height="905" viewBox="0 0 1919 905">
<line x1="1315" y1="616.5" x2="1745" y2="616.5" stroke="#8c8c8c" stroke-width="1"/>
<line x1="1315" y1="589.5" x2="1745" y2="589.5" stroke="#8c8c8c" stroke-width="1"/>
<line x1="1315" y1="561.5" x2="1745" y2="561.5" stroke="#8c8c8c" stroke-width="1"/>
<line x1="1315" y1="533.5" x2="1745" y2="533.5" stroke="#8c8c8c" stroke-width="1"/>
<line x1="1315" y1="505.5" x2="1745" y2="505.5" stroke="#8c8c8c" stroke-width="1"/>
<line x1="1315" y1="478.5" x2="1745" y2="478.5" stroke="#8c8c8c" stroke-width="1"/>
<line x1="1315" y1="450.5" x2="1745" y2="450.5" stroke="#8c8c8c" stroke-width="1"/>
<line x1="1315" y1="422.5" x2="1745" y2="422.5" stroke="#8c8c8c" stroke-width="1"/>
<line x1="1315" y1="395.5" x2="1745" y2="395.5" stroke="#8c8c8c" stroke-width="1"/>
<line x1="1315" y1="367.5" x2="1745" y2="367.5" stroke="#8c8c8c" stroke-width="1"/>
<line x1="1315" y1="339.5" x2="1745" y2="339.5" stroke="#8c8c8c" stroke-width="1"/>
<line x1="1315" y1="311.5" x2="1745" y2="311.5" stroke="#8c8c8c" stroke-width="1"/>
<line x1="1320.5" y1="311" x2="1320.5" y2="617" stroke="#8c8c8c" stroke-width="1"/>
<rect x="1336.6" y="339.1" width="16.6" height="277.3" fill="#82be82"/>
<rect x="1379.1" y="367.3" width="16.6" height="249.1" fill="#82be82"/>
<rect x="1418.8" y="395.7" width="16.6" height="220.7" fill="#82be82"/>
<rect x="1461.2" y="424.1" width="16.6" height="192.3" fill="#82be82"/>
<rect x="1502.3" y="452.6" width="16.6" height="163.8" fill="#82be82"/>
<rect x="1544.7" y="481.2" width="16.6" height="135.2" fill="#82be82"/>
<rect x="1585.8" y="509.9" width="16.6" height="106.5" fill="#82be82"/>
<rect x="1628.2" y="538.7" width="16.6" height="77.7" fill="#82be82"/>
<rect x="1670.6" y="567.6" width="16.6" height="48.8" fill="#82be82"/>
<rect x="1711.7" y="596.6" width="16.6" height="19.8" fill="#82be82"/>
<line x1="1315" y1="616.5" x2="1745" y2="616.5" stroke="#8c8c8c" stroke-width="1"/>
<line x1="1324.5" y1="617" x2="1324.5" y2="622" stroke="#8c8c8c" stroke-width="1"/>
<line x1="1406.5" y1="617" x2="1406.5" y2="622" stroke="#8c8c8c" stroke-width="1"/>
<line x1="1490.5" y1="617" x2="1490.5" y2="622" stroke="#8c8c8c" stroke-width="1"/>
<line x1="1573.5" y1="617" x2="1573.5" y2="622" stroke="#8c8c8c" stroke-width="1"/>
<line x1="1658.5" y1="617" x2="1658.5" y2="622" stroke="#8c8c8c" stroke-width="1"/>
<line x1="1742.5" y1="617" x2="1742.5" y2="622" stroke="#8c8c8c" stroke-width="1"/>
<rect x="1761" y="464" width="18" height="14" fill="#82be82"/>
</svg>
<div class="t" style="right:611px;top:611.2px;font-size:10.8px;font-weight:normal;color:#1a1a1a">£0.00</div>
<div class="t" style="right:611px;top:583.5px;font-size:10.8px;font-weight:normal;color:#1a1a1a">£500.00</div>
<div class="t" style="right:611px;top:555.7px;font-size:10.8px;font-weight:normal;color:#1a1a1a">£1,000.00</div>
<div class="t" style="right:611px;top:528.0px;font-size:10.8px;font-weight:normal;color:#1a1a1a">£1,500.00</div>
<div class="t" style="right:611px;top:500.3px;font-size:10.8px;font-weight:normal;color:#1a1a1a">£2,000.00</div>
<div class="t" style="right:611px;top:472.5px;font-size:10.8px;font-weight:normal;color:#1a1a1a">£2,500.00</div>
<div class="t" style="right:611px;top:444.8px;font-size:10.8px;font-weight:normal;color:#1a1a1a">£3,000.00</div>
<div class="t" style="right:611px;top:417.1px;font-size:10.8px;font-weight:normal;color:#1a1a1a">£3,500.00</div>
<div class="t" style="right:611px;top:389.4px;font-size:10.8px;font-weight:normal;color:#1a1a1a">£4,000.00</div>
<div class="t" style="right:611px;top:361.6px;font-size:10.8px;font-weight:normal;color:#1a1a1a">£4,500.00</div>
<div class="t" style="right:611px;top:333.9px;font-size:10.8px;font-weight:normal;color:#1a1a1a">£5,000.00</div>
<div class="t" style="right:611px;top:306.2px;font-size:10.8px;font-weight:normal;color:#1a1a1a">£5,500.00</div>
<div class="t" style="left:1174.3px;width:300px;text-align:center;top:626.6px;font-size:10.8px;font-weight:normal;color:#1a1a1a">01/01/2024</div>
<div class="t" style="left:1256.4311475409836px;width:300px;text-align:center;top:626.6px;font-size:10.8px;font-weight:normal;color:#1a1a1a">01/03/2024</div>
<div class="t" style="left:1339.9311475409836px;width:300px;text-align:center;top:626.6px;font-size:10.8px;font-weight:normal;color:#1a1a1a">01/05/2024</div>
<div class="t" style="left:1423.4311475409836px;width:300px;text-align:center;top:626.6px;font-size:10.8px;font-weight:normal;color:#1a1a1a">01/07/2024</div>
<div class="t" style="left:1508.3px;width:300px;text-align:center;top:626.6px;font-size:10.8px;font-weight:normal;color:#1a1a1a">01/09/2024</div>
<div class="t" style="left:1570px;width:300px;text-align:center;top:626.6px;font-size:10.8px;font-weight:normal;color:#1a1a1a">01/11/2024</div>
<div class="t" style="left:1783.5px;top:460.4px;font-size:10.5px;font-weight:normal;color:#1a1a1a">Beginning</div>
<div class="t" style="left:1783.5px;top:472.5px;font-size:10.5px;font-weight:normal;color:#1a1a1a">Balance</div>
</body></html>
